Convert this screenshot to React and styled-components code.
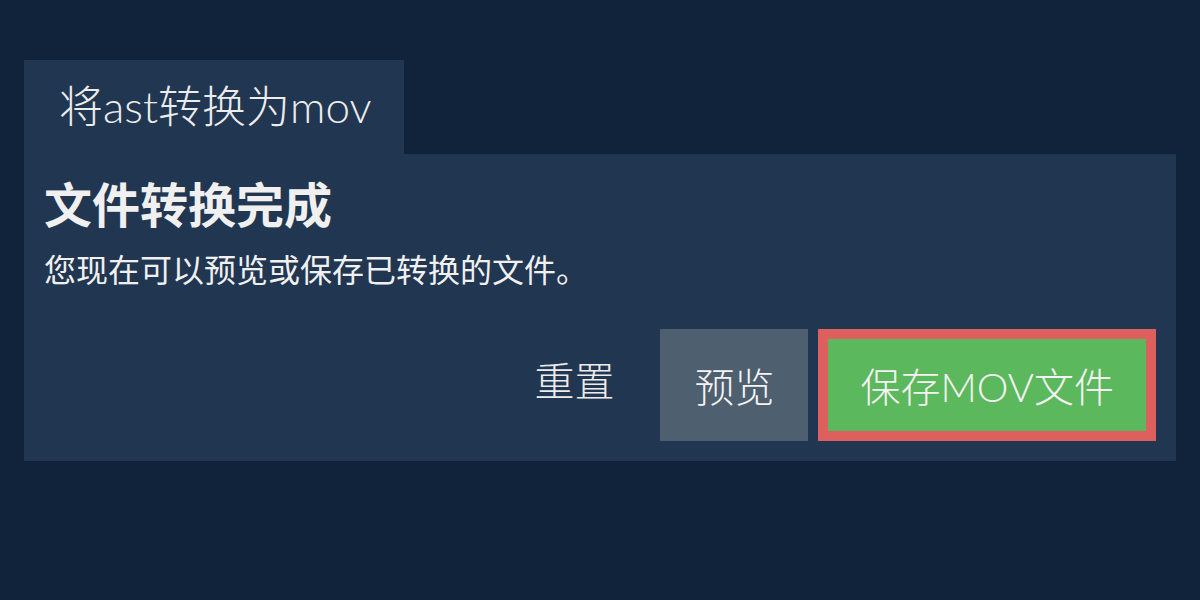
import React from 'react';
import styled, { createGlobalStyle } from 'styled-components';

const GlobalStyle = createGlobalStyle`
  html, body {
    margin: 0;
    padding: 0;
    background: #10233a;
  }
  body {
    font-family: 'Lato', 'Noto Sans CJK SC', sans-serif;
    color: #f0f0f0;
  }
`;

const Page = styled.div`
  padding: 60px 24px 0;
  height: 600px;
  box-sizing: border-box;
`;

const Tab = styled.div`
  display: inline-flex;
  align-items: center;
  height: 94px;
  box-sizing: border-box;
  padding: 0 32px 6px 35px;
  background: #213650;
  font-size: 44px;
  font-weight: 300;
  color: #ececec;
`;

const Panel = styled.section`
  background: #213650;
  padding: 20px;
`;

const Heading = styled.h1`
  margin: 0;
  font-size: 48px;
  font-weight: 700;
  line-height: 62px;
  color: #f0f0f0;
`;

const Message = styled.p`
  margin: 12px 0 0;
  font-size: 32px;
  line-height: 44px;
  font-weight: 400;
`;

const Actions = styled.div`
  display: flex;
  justify-content: flex-end;
  align-items: center;
  margin-top: 37px;
`;

const LinkButton = styled.button`
  background: none;
  border: none;
  padding: 0;
  margin: 0 46px 13px 0;
  font: inherit;
  font-size: 40px;
  font-weight: 300;
  color: #ececec;
  cursor: pointer;
`;

const Button = styled.button`
  height: 112px;
  box-sizing: border-box;
  padding: 0 ${p => (p.$primary ? 32 : 34)}px;
  margin-left: ${p => (p.$primary ? 10 : 0)}px;
  font: inherit;
  font-size: 40px;
  font-weight: 300;
  color: #f4f4f4;
  background: ${p => (p.$primary ? '#5cb85c' : '#4e5f70')};
  border: ${p => (p.$primary ? '10px solid #dd605e' : 'none')};
  cursor: pointer;
`;

export default function App() {
  return (
    <>
      <GlobalStyle />
      <Page>
        <Tab>将ast转换为mov</Tab>
        <Panel>
          <Heading>文件转换完成</Heading>
          <Message>您现在可以预览或保存已转换的文件。</Message>
          <Actions>
            <LinkButton>重置</LinkButton>
            <Button>预览</Button>
            <Button $primary>保存MOV文件</Button>
          </Actions>
        </Panel>
      </Page>
    </>
  );
}
